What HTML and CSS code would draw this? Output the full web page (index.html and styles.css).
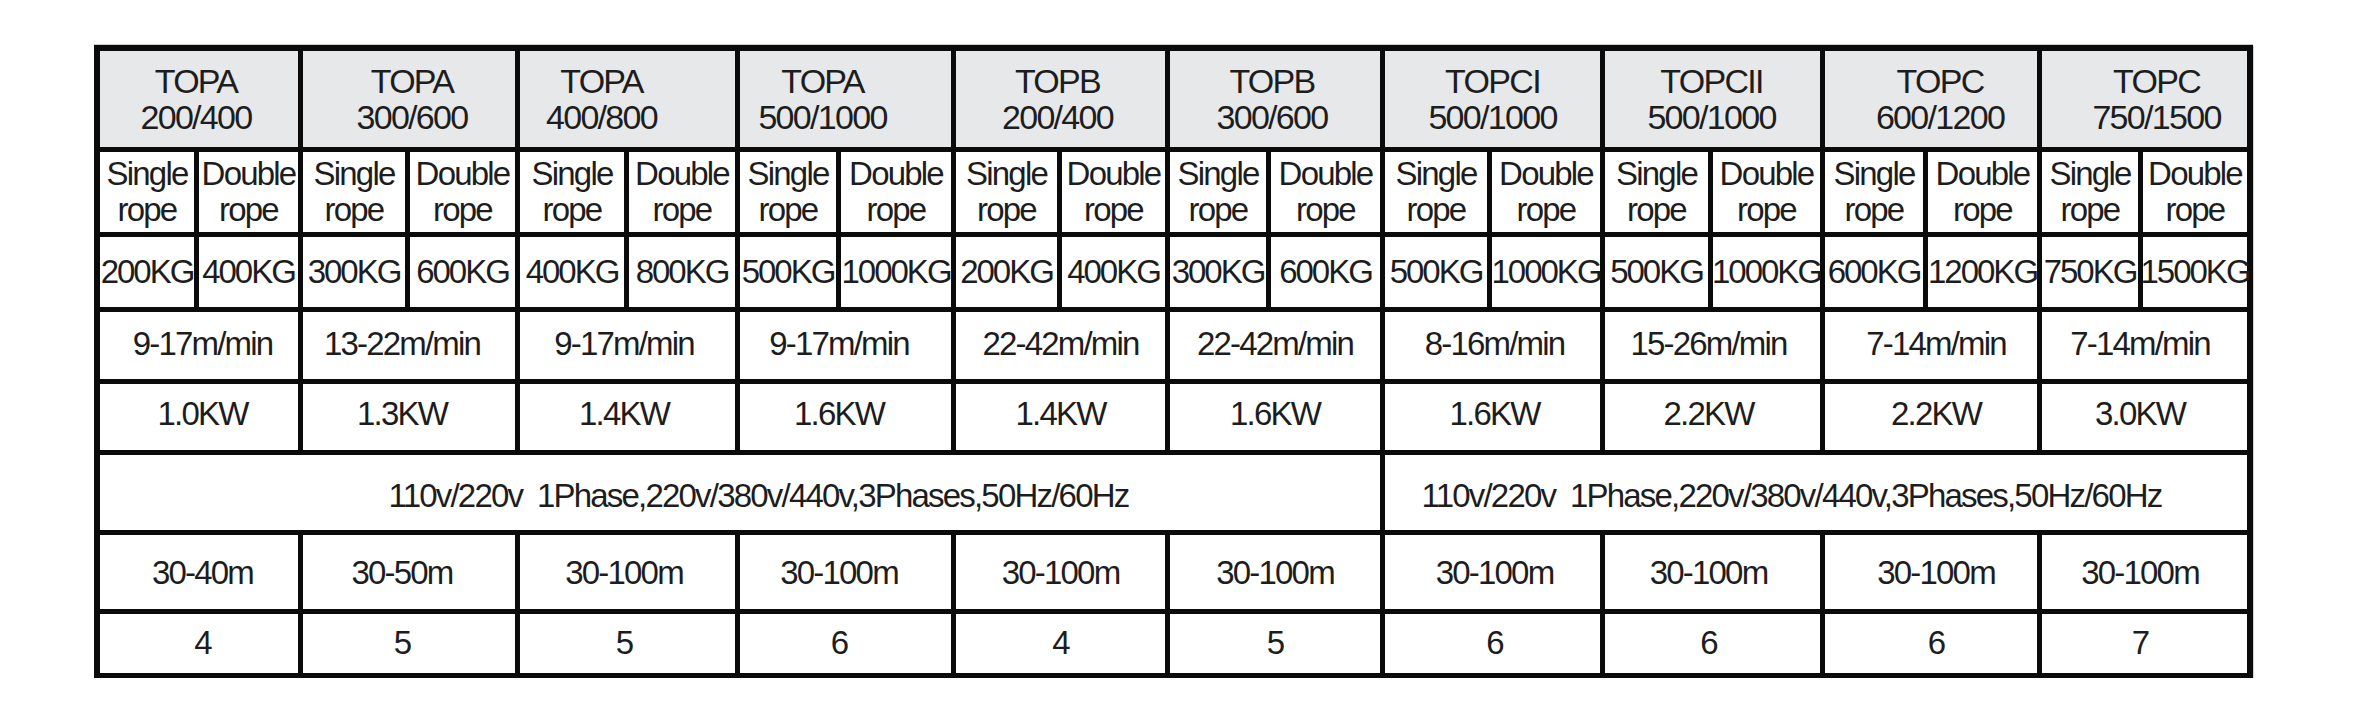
FILE: index.html
```html
<!DOCTYPE html>
<html>
<head>
<meta charset="utf-8">
<link rel="stylesheet" href="styles.css">
</head>
<body>
<div class="spec">
  <div class="c hd s2 pr6">TOPA<br>200/400</div>
  <div class="c hd s2 pl6">TOPA<br>300/600</div>
  <div class="c hd s2 pr52">TOPA<br>400/800</div>
  <div class="c hd s2 pr46">TOPA<br>500/1000</div>
  <div class="c hd s2 pr6">TOPB<br>200/400</div>
  <div class="c hd s2 pr6">TOPB<br>300/600</div>
  <div class="c hd s2">TOPCI<br>500/1000</div>
  <div class="c hd s2 pr2">TOPCII<br>500/1000</div>
  <div class="c hd s2 pl18">TOPC<br>600/1200</div>
  <div class="c hd s2 pl24">TOPC<br>750/1500</div>

  <div class="c rope">Single<br>rope</div><div class="c rope">Double<br>rope</div>
  <div class="c rope">Single<br>rope</div><div class="c rope">Double<br>rope</div>
  <div class="c rope">Single<br>rope</div><div class="c rope">Double<br>rope</div>
  <div class="c rope">Single<br>rope</div><div class="c rope">Double<br>rope</div>
  <div class="c rope">Single<br>rope</div><div class="c rope">Double<br>rope</div>
  <div class="c rope">Single<br>rope</div><div class="c rope">Double<br>rope</div>
  <div class="c rope">Single<br>rope</div><div class="c rope">Double<br>rope</div>
  <div class="c rope">Single<br>rope</div><div class="c rope">Double<br>rope</div>
  <div class="c rope">Single<br>rope</div><div class="c rope">Double<br>rope</div>
  <div class="c rope">Single<br>rope</div><div class="c rope">Double<br>rope</div>

  <div class="c kg">200KG</div><div class="c kg">400KG</div>
  <div class="c kg">300KG</div><div class="c kg">600KG</div>
  <div class="c kg">400KG</div><div class="c kg">800KG</div>
  <div class="c kg">500KG</div><div class="c kg">1000KG</div>
  <div class="c kg">200KG</div><div class="c kg">400KG</div>
  <div class="c kg">300KG</div><div class="c kg">600KG</div>
  <div class="c kg">500KG</div><div class="c kg">1000KG</div>
  <div class="c kg">500KG</div><div class="c kg">1000KG</div>
  <div class="c kg">600KG</div><div class="c kg">1200KG</div>
  <div class="c kg">750KG</div><div class="c kg">1500KG</div>

  <div class="c s2 speed k1">9-17m/min</div>
  <div class="c s2 speed k2">13-22m/min</div>
  <div class="c s2 speed k3">9-17m/min</div>
  <div class="c s2 speed k4">9-17m/min</div>
  <div class="c s2 speed">22-42m/min</div>
  <div class="c s2 speed">22-42m/min</div>
  <div class="c s2 speed k7">8-16m/min</div>
  <div class="c s2 speed k8">15-26m/min</div>
  <div class="c s2 speed k9">7-14m/min</div>
  <div class="c s2 speed k10">7-14m/min</div>

  <div class="c s2 kw k1">1.0KW</div>
  <div class="c s2 kw k2">1.3KW</div>
  <div class="c s2 kw k3">1.4KW</div>
  <div class="c s2 kw k4">1.6KW</div>
  <div class="c s2 kw">1.4KW</div>
  <div class="c s2 kw">1.6KW</div>
  <div class="c s2 kw k7">1.6KW</div>
  <div class="c s2 kw k8">2.2KW</div>
  <div class="c s2 kw k9">2.2KW</div>
  <div class="c s2 kw k10">3.0KW</div>

  <div class="c volt volt-a">110v/220v&nbsp; 1Phase,220v/380v/440v,3Phases,50Hz/60Hz</div>
  <div class="c volt volt-b">110v/220v&nbsp; 1Phase,220v/380v/440v,3Phases,50Hz/60Hz</div>

  <div class="c s2 len k1">30-40m</div>
  <div class="c s2 len k2">30-50m</div>
  <div class="c s2 len k3">30-100m</div>
  <div class="c s2 len k4">30-100m</div>
  <div class="c s2 len">30-100m</div>
  <div class="c s2 len">30-100m</div>
  <div class="c s2 len k7">30-100m</div>
  <div class="c s2 len k8">30-100m</div>
  <div class="c s2 len k9">30-100m</div>
  <div class="c s2 len k10">30-100m</div>

  <div class="c s2 num k1">4</div>
  <div class="c s2 num k2">5</div>
  <div class="c s2 num k3">5</div>
  <div class="c s2 num k4">6</div>
  <div class="c s2 num">4</div>
  <div class="c s2 num">5</div>
  <div class="c s2 num k7">6</div>
  <div class="c s2 num k8">6</div>
  <div class="c s2 num k9">6</div>
  <div class="c s2 num k10">7</div>
</div>
</body>
</html>
```
FILE: styles.css
```css
html, body {
  margin: 0;
  padding: 0;
  background: #ffffff;
}

body {
  font-family: "Liberation Sans", Arial, sans-serif;
  color: #1d1d1d;
}

.spec {
  margin: 45px 0 0 94px;
  width: 2159px;
  box-sizing: border-box;
  background: #0b0b0b;
  padding: 6px 6px 5px 6px;
  display: grid;
  grid-template-columns: 94px 99px 102px 105px 104px 106px 96px 110px 101px 103px 96px 109px 102px 108px 103px 107px 98px 109px 96px 104px;
  grid-template-rows: 96px 80px 70px 67px 66px 75px 74px 59px;
  gap: 5px;
  box-shadow: 0 -1px 0 #c8c8c8, 1px 1px 0 #d0d0d0;
}

.c {
  background: #ffffff;
  display: flex;
  align-items: center;
  justify-content: center;
  text-align: center;
  white-space: nowrap;
  box-sizing: border-box;
  font-size: 33px;
  line-height: 36.5px;
  letter-spacing: -1.8px;
  overflow: visible;
}

.s2 { grid-column: span 2; }

.hd {
  background: #e7e8ea;
  font-size: 34px;
  letter-spacing: -1.7px;
}

.kg { letter-spacing: -2px; }

.speed { padding-bottom: 2px; }
.kw { padding-bottom: 5px; }
.len { padding-top: 3px; }

.volt { padding-top: 8px; }
.volt-a { grid-column: span 12; padding-left: 37px; }
.volt-b { grid-column: span 8; padding-right: 49px; }

/* header horizontal offsets */
.pr2 { padding-right: 2px; }
.pr6 { padding-right: 6px; }
.pr46 { padding-right: 46px; }
.pr52 { padding-right: 52px; }
.pl6 { padding-left: 6px; }
.pl18 { padding-left: 18px; }
.pl24 { padding-left: 24px; }

/* body column offsets */
.k1 { padding-left: 7px; }
.k2 { padding-right: 14px; }
.k3 { padding-right: 7px; }
.k4 { padding-right: 13px; }
.k7 { padding-left: 4px; }
.k8 { padding-right: 8px; }
.k9 { padding-left: 10px; }
.k10 { padding-right: 9px; }
```
